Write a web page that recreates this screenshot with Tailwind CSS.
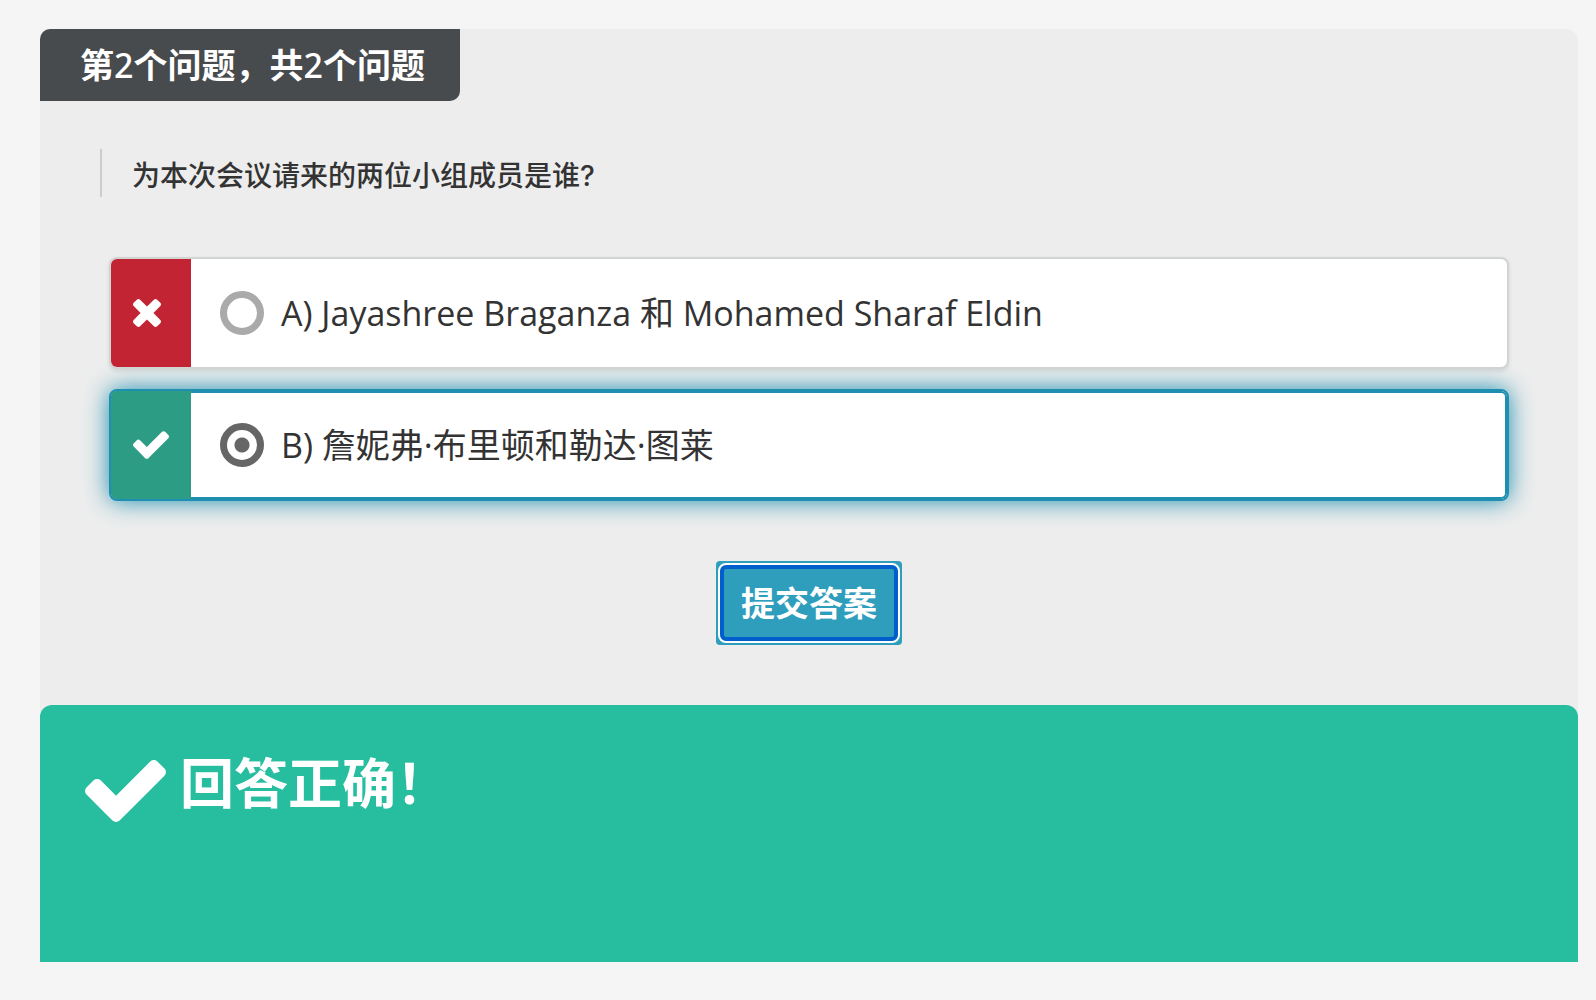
<!DOCTYPE html>
<html lang="zh-CN">
<head>
    <meta charset="UTF-8">
    <meta name="viewport" content="width=device-width, initial-scale=1.0">
    <title>测验</title>
    <script src="https://cdn.jsdelivr.net/npm/@tailwindcss/browser@4"></script>
</head>
<body class="bg-[#f5f5f5] font-['Open_Sans','Noto_Sans_CJK_SC',sans-serif] text-[#333]">
    <main class="mt-[29px] ml-10 mr-[18px] rounded-t-xl bg-[#ededed]">
        <h1 class="w-fit rounded-tl-[10px] rounded-br-[10px] bg-[#484b4d] pl-10 pr-[35px] text-[34px] leading-[72px] font-bold text-white">第<span class="font-['Noto_Sans'] font-medium">2</span>个问题，共<span class="font-['Noto_Sans'] font-medium">2</span>个问题</h1>

        <form class="px-[60px] pt-12 pb-[60px]" onsubmit="return false">
            <h2 class="border-l-2 border-[#ccc] pt-1.5 pl-[30px] font-['Inter','Noto_Sans_CJK_SC',sans-serif] text-[28px] leading-[42px] font-medium">为本次会议请来的两位小组成员是谁?</h2>

            <!-- Answers -->
            <div class="mt-[60px] ml-[9px] mr-[9px] flex flex-col gap-5">
                <label class="relative z-10 flex h-28 items-center rounded-lg border-2 border-[#d0d5d4] bg-white shadow-[0_2px_4px_rgba(0,0,0,0.1)]">
                    <span class="flex w-20 self-stretch items-center rounded-l-md bg-[#c22434] pl-[22px]">
                        <svg class="h-7 w-7 fill-white" viewBox="302 366 1188 1188"><path d="M1490 1322q0 40-28 68l-136 136q-28 28-68 28t-68-28l-294-294-294 294q-28 28-68 28t-68-28l-136-136q-28-28-28-68t28-68l294-294-294-294q-28-28-28-68t28-68l136-136q28-28 68-28t68 28l294 294 294-294q28-28 68-28t68 28l136 136q28 28 28 68t-28 68l-294 294 294 294q28 28 28 68z"/></svg>
                    </span>
                    <input type="radio" name="answer" class="ml-[29px] h-11 w-11 appearance-none rounded-full border-[7px] border-[#aaa]">
                    <span class="ml-[17px] text-[34px] leading-[48px]">A) Jayashree Braganza 和 Mohamed Sharaf Eldin</span>
                </label>

                <label class="flex h-28 items-center rounded-lg border-2 border-[#1e8fb0] bg-white shadow-[inset_0_0_0_2px_#1e8fb0,0_0_24px_#1e8fb0]">
                    <span class="flex w-20 self-stretch items-center rounded-l-md bg-[#2d9c85] pl-[22px]">
                        <svg class="h-7 w-9 fill-white" viewBox="121 334 1550 1188"><path d="M1671 566q0 40-28 68l-724 724-136 136q-28 28-68 28t-68-28l-136-136-362-362q-28-28-28-68t28-68l136-136q28-28 68-28t68 28l294 295 656-657q28-28 68-28t68 28l136 136q28 28 28 68z"/></svg>
                    </span>
                    <input type="radio" name="answer" checked class="ml-[29px] h-11 w-11 appearance-none rounded-full border-[7px] border-[#666] bg-[radial-gradient(circle,#666_7px,transparent_8px)]">
                    <span class="ml-[17px] text-[34px] leading-[48px]">B) 詹妮弗·布里顿和勒达·图莱</span>
                </label>
            </div>

            <button type="submit" class="mx-auto mt-[60px] block h-[84px] w-[186px] rounded-sm bg-[#2f9dbc] p-[2px] text-[34px] font-bold text-white">
                <span class="flex h-full items-center justify-center rounded-lg border-2 border-white bg-white">
                    <span class="flex h-full w-full items-center justify-center rounded-md border-4 border-[#005fcc] bg-[#2f9dbc] leading-[48px]">提交答案</span>
                </span>
            </button>
        </form>

        <!-- Result -->
        <section class="flex min-h-[257px] items-start gap-[14px] rounded-t-xl bg-[#27bd9f] px-[45px] pt-10 text-white">
            <svg class="mt-[15px] h-[62px] w-[81px] fill-current" viewBox="121 334 1550 1188"><path d="M1671 566q0 40-28 68l-724 724-136 136q-28 28-68 28t-68-28l-136-136-362-362q-28-28-28-68t28-68l136-136q28-28 68-28t68 28l294 295 656-657q28-28 68-28t68 28l136 136q28 28 28 68z"/></svg>
            <p class="text-[54px] leading-[76px] font-bold">回答正确！</p>
        </section>
    </main>
</body>
</html>
